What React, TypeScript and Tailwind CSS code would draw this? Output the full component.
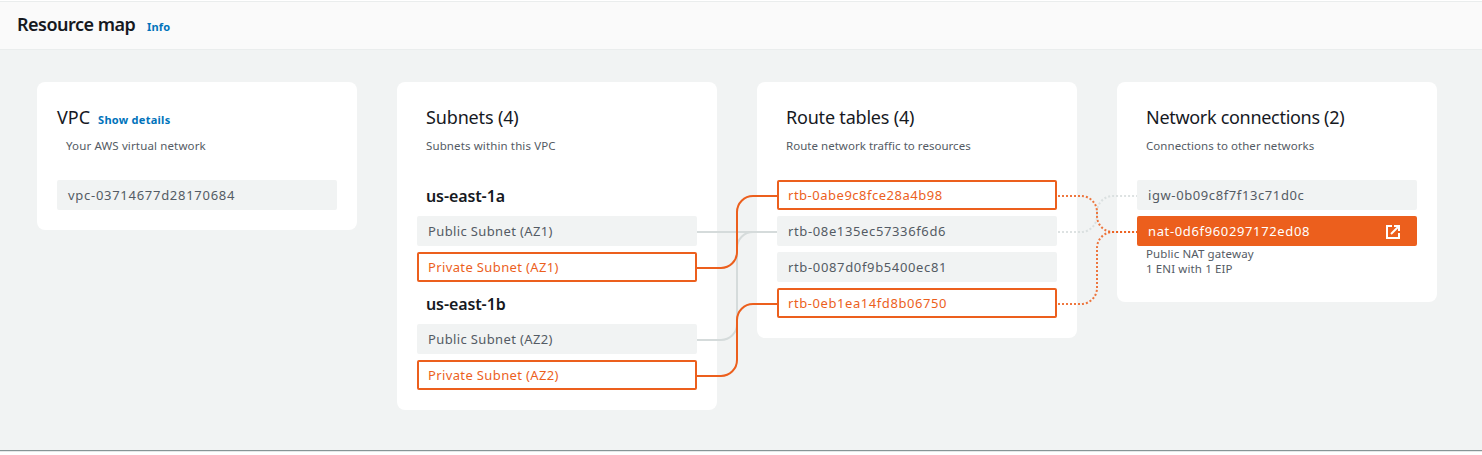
import type { ReactNode } from "react";

function Card({ children }: { children: ReactNode }) {
  return <section className="w-80 shrink-0 rounded-lg bg-white px-5 pt-[23px] pb-5">{children}</section>;
}

function Heading({ title, note, titleFit, noteFit = "" }: { title: string; note: string; titleFit: string; noteFit?: string }) {
  return (
    <div className="mb-[25px] h-[50px] pl-[9px]">
      <h2 className={`text-[18px] leading-[24px] text-[#16191f] ${titleFit}`}>{title}</h2>
      <p className={`mt-[7px] text-[11.5px] leading-[20px] text-[#545b64] ${noteFit}`}>{note}</p>
    </div>
  );
}

function Zone({ name }: { name: string }) {
  return (
    <h3 className="h-[30px] pl-[9px] text-[16px] leading-[32px] font-semibold tracking-[-0.1px] text-[#16191f]">{name}</h3>
  );
}

function Item({
  label,
  kind = "plain",
  fit = "tracking-[0.37px]",
}: {
  label: string;
  kind?: "plain" | "active" | "selected";
  fit?: string;
}) {
  const look = {
    plain: "border-[#f1f3f3] bg-[#f1f3f3] text-[#545b64]",
    active: "border-[#ec5f1d] bg-white text-[#ec5f1d]",
    selected: "border-[#ec5f1d] bg-[#ec5f1d] text-white",
  }[kind];
  return (
    <div className={`flex h-[30px] items-center justify-between rounded-xs border-2 pr-3.5 pl-[9px] text-[13px] leading-none ${look}`}>
      <span className={fit}>{label}</span>
      {kind === "selected" && (
        <svg className="mt-px" width="16" height="16" viewBox="0 0 16 16" fill="none" stroke="currentColor" strokeWidth="2">
          <path d="M7 2H2v12h12V9" />
          <path d="M9 2h5v5" />
          <path d="M14 2 6 10" />
        </svg>
      )}
    </div>
  );
}

function Connectors() {
  return (
    <svg className="pointer-events-none absolute top-0 left-0" width="1400" height="328" viewBox="37 82 1400 328" fill="none" strokeWidth="2">
      <g stroke="#d5dbdb">
        <path d="M697 232H777" />
        <path d="M697 340H721A16 16 0 0 0 737 324V248A16 16 0 0 1 753 232H777" />
      </g>
      <g stroke="#ec5f1d">
        <path d="M697 268H721A16 16 0 0 0 737 252V212A16 16 0 0 1 753 196H777" />
        <path d="M697 376H721A16 16 0 0 0 737 360V320A16 16 0 0 1 753 304H777" />
      </g>
      <g strokeDasharray="2 2" strokeDashoffset="-1">
        <path stroke="#d5dbdb" strokeOpacity="0.8" d="M1057 232H1081A16 16 0 0 0 1097 216V212A16 16 0 0 1 1113 196H1137" />
        <path stroke="#ec5f1d" strokeOpacity="0.85" d="M1057 196H1081A16 16 0 0 1 1097 212V216A16 16 0 0 0 1113 232H1137" />
        <path stroke="#ec5f1d" strokeOpacity="0.85" d="M1057 304H1081A16 16 0 0 0 1097 288V248A16 16 0 0 1 1113 232H1137" />
      </g>
    </svg>
  );
}

export default function App() {
  return (
    <main className="flex h-[455px] w-[1482px] flex-col overflow-hidden bg-white pt-px font-['Noto_Sans',sans-serif]">
      <header className="flex h-[49px] shrink-0 items-baseline gap-3 border-y border-[#eaeded] bg-[#fafafa] pt-[9px] pl-[17px]">
        <h1 className="w-[118px] text-[18px] leading-[26px] font-semibold tracking-[-0.5px] whitespace-nowrap text-[#16191f]">Resource map</h1>
        <a className="text-[11px] font-bold tracking-[0.15px] text-[#0073bb]">Info</a>
      </header>
      <div className="h-[401px] shrink-0 border-b border-[#879596] bg-[#f1f3f3] pt-8 pl-[37px]">
        <div className="relative flex items-start gap-10">
          <Card>
            <div className="mb-[25px] h-[50px]">
              <h2 className="flex h-6 items-baseline gap-2 text-[18px] leading-[24px] text-[#16191f]">
                <span>VPC</span>
                <a className="text-[11px] font-bold tracking-[0.27px] text-[#0073bb]">Show details</a>
              </h2>
              <p className="mt-[7px] pl-[9px] text-[11.5px] leading-[20px] tracking-[0.14px] text-[#545b64]">Your AWS virtual network</p>
            </div>
            <Item label="vpc-03714677d28170684" fit="tracking-[0.72px]" />
          </Card>
          <Card>
            <Heading title="Subnets (4)" note="Subnets within this VPC" titleFit="tracking-[-0.15px]" noteFit="tracking-[0.12px]" />
            <div className="flex flex-col gap-1.5">
              <Zone name="us-east-1a" />
              <Item label="Public Subnet (AZ1)" />
              <Item label="Private Subnet (AZ1)" kind="active" />
              <Zone name="us-east-1b" />
              <Item label="Public Subnet (AZ2)" />
              <Item label="Private Subnet (AZ2)" kind="active" />
            </div>
          </Card>
          <Card>
            <Heading title="Route tables (4)" note="Route network traffic to resources" titleFit="tracking-[-0.2px]" noteFit="tracking-[0.03px]" />
            <div className="flex flex-col gap-1.5">
              <Item label="rtb-0abe9c8fce28a4b98" kind="active" fit="tracking-[0.51px]" />
              <Item label="rtb-08e135ec57336f6d6" fit="tracking-[0.63px]" />
              <Item label="rtb-0087d0f9b5400ec81" fit="tracking-[0.65px]" />
              <Item label="rtb-0eb1ea14fd8b06750" kind="active" fit="tracking-[0.57px]" />
            </div>
          </Card>
          <Card>
            <Heading title="Network connections (2)" note="Connections to other networks" titleFit="tracking-[-0.3px]" noteFit="tracking-[0.05px]" />
            <div className="flex flex-col gap-1.5">
              <Item label="igw-0b09c8f7f13c71d0c" fit="tracking-[0.6px]" />
              <Item label="nat-0d6f960297172ed08" kind="selected" fit="tracking-[0.64px]" />
            </div>
            <div className="h-9 pl-[9px] text-[11.5px] leading-[15px] tracking-[0.12px] text-[#545b64]">
              <p>Public NAT gateway</p>
              <p>1 ENI with 1 EIP</p>
            </div>
          </Card>
          <Connectors />
        </div>
      </div>
      <div className="h-px shrink-0 bg-[#e4e8e8]" />
    </main>
  );
}
